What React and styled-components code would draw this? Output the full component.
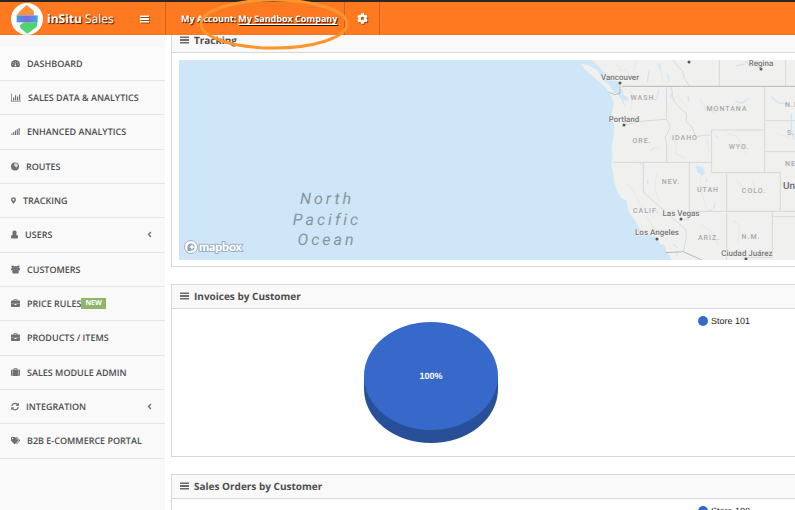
import React from 'react';
import styled, { createGlobalStyle, css } from 'styled-components';
import {
  FaSignal,
  FaMapMarkerAlt,
  FaSyncAlt,
  FaTags,
  FaCog,
  FaAngleLeft,
} from 'react-icons/fa';

const GlobalStyle = createGlobalStyle`
  * {
    box-sizing: border-box;
  }

  body {
    margin: 0;
    background: #fff;
    color: #4d4d4d;
    font-family: 'Open Sans', 'Noto Sans', sans-serif;
    font-size: 10px;
    text-rendering: geometricPrecision;
    overflow: hidden;
  }
`;

const Page = styled.div`
  min-height: 100vh;
  display: flex;
  flex-direction: column;
`;

const TopBar = styled.header`
  position: relative;
  z-index: 2;
  display: flex;
  height: 35px;
  border-top: 2px solid #2b2523;
  background: #ff7921;
  color: #fff;
  text-shadow: 1px 1px 1px rgba(0, 0, 0, 0.85);
`;

const Brand = styled.div`
  width: 166px;
  padding: 0 16px 0 11px;
  display: flex;
  align-items: center;
  justify-content: space-between;
  border-right: 1px solid #cf6320;
`;

const BrandLink = styled.a`
  display: flex;
  align-items: center;
  gap: 4px;
  color: inherit;
  font-size: 12px;
  text-decoration: none;
  white-space: nowrap;
`;

const IconButton = styled.button`
  display: flex;
  align-items: center;
  justify-content: center;
  padding: 0;
  border: 0;
  background: none;
  color: #fff;
  font-size: 11px;

  svg {
    filter: drop-shadow(1px 1px 0 rgba(0, 0, 0, 0.4));
  }
`;

const Account = styled.div`
  position: relative;
  display: flex;
  align-items: center;
  gap: 2px;
  width: 179px;
  padding-left: 15px;
  border-right: 1px solid #cf6320;
  font-size: 9px;
  font-weight: 700;
  white-space: nowrap;

  a {
    color: inherit;
    text-underline-offset: 2px;
  }
`;

const Settings = styled.div`
  width: 35px;
  display: flex;
  justify-content: center;
  border-right: 1px solid #cf6320;
`;

const Highlight = styled.svg`
  position: absolute;
  top: -5px;
  left: 31px;
  pointer-events: none;
`;

const Body = styled.div`
  flex: 1;
  display: flex;
`;

const Sidebar = styled.nav`
  flex: 0 0 165px;
  padding-top: 12px;
  background: #f9f9f9;
`;

const Menu = styled.ul`
  margin: 0;
  padding: 0;
  list-style: none;
`;

const MenuItem = styled.li`
  display: flex;
  height: 34px;
  border-bottom: 1px solid #e5e5e5;

  &:nth-child(3n) {
    height: 35px;
  }

  ${({ $active }) =>
    $active &&
    css`
      background: #fcfcfc;
    `}
`;

const MenuLink = styled.a`
  flex: 1;
  display: flex;
  align-items: center;
  padding: 0 11px 1px;
  color: #4d4d4d;
  font-size: 9px;
  font-weight: 600;
  text-decoration: none;
  white-space: nowrap;
`;

const MenuIcon = styled.span`
  display: flex;
  flex: 0 0 ${({ $width }) => $width}px;
  margin-right: 7px;
  color: #707070;

  svg {
    width: 100%;
    height: 9px;
  }
`;

const Arrow = styled(FaAngleLeft)`
  margin-left: auto;
  color: #707070;
`;

const Badge = styled.span`
  padding: 0 4px;
  background: #8fb56b;
  color: #fff;
  font-size: 7px;
  font-weight: 700;
  line-height: 11px;
`;

const Content = styled.main`
  flex: 1;
  min-width: 0;
  display: flex;
  flex-direction: column;
  gap: 17px;
  margin-top: -7px;
  padding-left: 6px;
`;

const Panel = styled.section`
  border: 1px solid #d8d8d8;
  border-right: 0;
`;

const PanelHeader = styled.h2`
  display: flex;
  align-items: center;
  gap: 5px;
  height: 24px;
  margin: 0;
  padding: 0 0 2px 8px;
  border-bottom: 1px solid #d8d8d8;
  background: #f9f9f9;
  font-size: 10px;
  font-weight: 700;

  svg {
    color: #6a6a6a;
  }
`;

const MapBody = styled.div`
  padding: 7px 0 6px 7px;
`;

const MapCanvas = styled.svg`
  display: block;
  width: 100%;
  height: 200px;
  background: #cfe5f8;
`;

const CityLabel = styled.text`
  fill: #777;
  stroke: #f5f5f4;
  stroke-width: 1px;
  paint-order: stroke;
  font: 500 8px Roboto, sans-serif;
  text-anchor: middle;
`;

const StateLabel = styled.text`
  fill: #a9a9a9;
  font: 500 7px Roboto, sans-serif;
  letter-spacing: 1px;
  text-anchor: ${({ $start }) => ($start ? 'start' : 'middle')};
`;

const OceanLabel = styled.text`
  fill: #84979c;
  font: italic 400 16px Roboto, sans-serif;
  letter-spacing: 3px;
  text-anchor: middle;
`;

const CountryLabel = styled.text`
  fill: #6c6c6c;
  font: 500 10px Roboto, sans-serif;
`;

const MapLogoText = styled.text`
  fill: #fff;
  stroke: #9db2c2;
  stroke-width: 2px;
  paint-order: stroke;
  font: 900 12px Lato, sans-serif;
`;

const ChartBody = styled.div`
  display: grid;
  grid-template-columns: 1fr 105px;
  padding: 13px 0;
`;

const Pie = styled.svg`
  justify-self: center;
  display: block;

  text {
    fill: #fff;
    font: 700 9px 'Liberation Sans', Arial, sans-serif;
    text-anchor: middle;
  }
`;

const Legend = styled.ul`
  margin: 0;
  padding: 0 0 0 8px;
  list-style: none;
  color: #222;
  font: 9px/12px 'Liberation Sans', Arial, sans-serif;
`;

const LegendItem = styled.li`
  display: flex;
  align-items: center;
  gap: 3px;
  margin-top: -7px;

  &::before {
    content: '';
    width: 10px;
    height: 10px;
    border-radius: 50%;
    background: #3669c9;
  }
`;

const BarsIcon = () => (
  <svg width="9" height="8" viewBox="0 0 18 16" fill="currentColor">
    <path d="M0 1h18v3H0zM0 6h18v4H0zM0 12h18v3H0z" />
  </svg>
);

const DashboardIcon = () => (
  <svg viewBox="0 0 18 18" fill="currentColor">
    <path d="M9 2a9 9 0 0 0-9 9c0 2 .6 3.700 1.500 5h15c.9-1.300 1.500-3 1.500-5a9 9 0 0 0-9-9z" />
    <g fill="#f9f9f9">
      <circle cx="3.500" cy="11" r=".8" />
      <circle cx="5" cy="7" r=".8" />
      <circle cx="9" cy="5.200" r=".8" />
      <circle cx="13" cy="7" r=".8" />
      <circle cx="14.500" cy="11" r=".8" />
      <path d="M9.200 7.500l1 .2-.5 3.800a1.600 1.600 0 1 1-1.200-.2z" />
    </g>
  </svg>
);

const ChartIcon = () => (
  <svg viewBox="0 0 20 18" fill="currentColor">
    <path d="M0 1h1.500v14.500H20V17H0zM4 9h2.400v5.500H4zM8 4.500h2.400v10H8zM12 7h2.400v7.500H12zM16 3h2.400v11.500H16z" />
  </svg>
);

const GlobeIcon = () => (
  <svg viewBox="0 0 16 18" fill="currentColor">
    <circle cx="8" cy="9" r="8" />
    <path d="M7 3l5 0 2 4-3 4-3-2-2-3z" fill="#f9f9f9" opacity="0.8" />
  </svg>
);

const UserIcon = () => (
  <svg viewBox="0 0 14 18" fill="currentColor">
    <path d="M7 1a4.200 4.200 0 0 1 4.200 4.500c0 1.400-.5 2.700-1.300 3.500C12.500 9.300 14 11 14 14.500c0 1.600-1 2.500-2.500 2.500h-9C1 17 0 16.100 0 14.500 0 11 1.500 9.300 4.100 9a5 5 0 0 1-1.300-3.500A4.200 4.200 0 0 1 7 1z" />
  </svg>
);

const UsersIcon = () => (
  <svg viewBox="0 0 18 18" fill="currentColor">
    <circle cx="3.500" cy="3.500" r="2.700" />
    <circle cx="14.500" cy="3.500" r="2.700" />
    <path d="M0 9.500C0 7 1 6 2 6h4v5H1.500Q0 11 0 9.500zM18 9.500C18 7 17 6 16 6h-4v5h4.500Q18 11 18 9.500z" />
    <circle cx="9" cy="6.200" r="4" />
    <path d="M2.500 14.500c0-3.500 1.500-5 3.500-5h6c2 0 3.500 1.500 3.500 5 0 1.600-1 2.500-2.500 2.500H5c-1.500 0-2.500-.9-2.500-2.500z" />
  </svg>
);

const BriefcaseIcon = () => (
  <svg viewBox="0 0 18 18" fill="currentColor">
    <path d="M5 3V2Q5 .5 6.500.5h5Q13 .5 13 2v1h3.500Q18 3 18 4.500v5H0v-5Q0 3 1.500 3zM6.500 3h5V2h-5zM0 10.200h7v1.600h4v-1.600h7v4.300q0 1.500-1.500 1.500h-15Q0 16 0 14.500z" />
  </svg>
);

const SuitcaseIcon = () => (
  <svg viewBox="0 0 18 18" fill="currentColor">
    <path d="M5 3V2Q5 .5 6.500.5h5Q13 .5 13 2v1h1.500v13h-11V3zM6.500 3h5V2h-5zM2.700 3v13H2q-2 0-2-2V5q0-2 2-2zM15.300 3v13h.7q2 0 2-2V5q0-2-2-2z" />
  </svg>
);

const Logo = () => (
  <svg width="32" height="32" viewBox="0 0 96 96" aria-hidden="true">
    <defs>
      <linearGradient id="logoBand">
        <stop offset="0" stopColor="#3b9cf0" />
        <stop offset="0.5" stopColor="#8368d8" />
        <stop offset="1" stopColor="#35a9ee" />
      </linearGradient>
    </defs>
    <circle cx="48" cy="48" r="48" fill="#fff" />
    <path d="M47 6l21 17 1 14H17l10-13z" fill="#fb9140" />
    <path d="M27 67l11-9h41l-2 14-28 20-21-17z" fill="#50d36f" />
    <path d="M17 37h63v21H17z" fill="url(#logoBand)" />
  </svg>
);

const menu = [
  { label: 'DASHBOARD', icon: DashboardIcon, width: 9, active: true },
  { label: 'SALES DATA & ANALYTICS', icon: ChartIcon, width: 10 },
  { label: 'ENHANCED ANALYTICS', icon: FaSignal, width: 9 },
  { label: 'ROUTES', icon: GlobeIcon, width: 8 },
  { label: 'TRACKING', icon: FaMapMarkerAlt, width: 5 },
  { label: 'USERS', icon: UserIcon, width: 7, children: true },
  { label: 'CUSTOMERS', icon: UsersIcon, width: 9 },
  { label: 'PRICE RULES', icon: BriefcaseIcon, width: 9, badge: 'NEW' },
  { label: 'PRODUCTS / ITEMS', icon: BriefcaseIcon, width: 9 },
  { label: 'SALES MODULE ADMIN', icon: SuitcaseIcon, width: 9 },
  { label: 'INTEGRATION', icon: FaSyncAlt, width: 8, children: true },
  { label: 'B2B E-COMMERCE PORTAL', icon: FaTags, width: 9 },
];

const cities = [
  ['Vancouver', 441, 20, 441, 23],
  ['Portland', 445, 62, 445, 65],
  ['Regina', 582, 6, 582, 9],
  ['Las Vegas', 502, 156, 502, 159],
  ['Los Angeles', 478, 175, 478, 179],
  ['Ciudad Juárez', 568, 196, 567, 199],
  ['', 510, 0, 510, 2],
];

const states = [
  ['WASH.', 465, 40],
  ['MONTANA', 548, 51],
  ['ORE.', 463, 83],
  ['IDAHO', 506, 80],
  ['WYO.', 560, 89],
  ['NEV.', 492, 124],
  ['UTAH', 529, 132],
  ['COLO.', 575, 133],
  ['CALIF.', 467, 153],
  ['ARIZ.', 530, 180],
  ['N.M.', 572, 179],
  ['N.D.', 606, 47, true],
  ['S.D.', 608, 75, true],
  ['NEBR.', 606, 106, true],
];

const TrackingMap = () => (
  <MapCanvas role="img" aria-label="Tracking map">
    {/* land is drawn at three times the map's scale */}
    <g transform="translate(381 -10) scale(.3333)">
      <g fill="#f0f0ef">
        <path d="M62 42l20 2 18 10 14 8 12 24 22 20 14 22 8 8-20-4-12-18-16-14-24-22-26-22z" />
        <path d="M98 28l8 14 14 8 6 14 10 4 2 12 26 10 16 6v28l12 12 14 8-6 8-20-8-8-14-26-4 10 18 6 16-6 30 6 40-2 32-6 30 4 30-4 26 6 24 2 24 10 26 10 20 15 10 10 35 15 20 15 25 6 15 30 8 20 10 8 17 14 7 4 16 10 14 6 16H2000V20H98z" />
      </g>
      <g fill="none" stroke="#e9e9e7" strokeWidth="4">
        <path d="M170 40l12 22 16-4 14 24M230 34l-10 28 22 24M290 40l12 20 6 30 16 10M208 120l10 18-4 40M350 130l14 24 20 18M420 150l22 30 28 10M330 260l20 20-4 30 30 16M500 250l30 10 22 28-8 12M540 290l22 22M420 380l6 50 14 50M290 370l-6 40 12 40M530 390l22 26 26 4M580 390l4 44M520 510l20 20-6 50M420 520l32 24 24 40M660 400l24 10M200 400l24 26 16 40 40 36M260 500l24 40 22 20M440 270l10 40M650 250l40 14M270 300l28-8" />
      </g>
      <g fill="none" stroke="#cfe5f8" strokeWidth="4">
        <path d="M184 118l6 16-4 16 10 18M268 62l-6 34M322 70l6 26M296 118l-6 30M298 40l4 20M525 155l22 4 18-14M634 140l20 18 24 4M694 190v50l8 30M528 48l26-6M556 34l10 10M616 40h20M384 138l2 16M334 130l-2 14M440 486l16-8M466 460l-6 16M370 510l16-4M240 338l4 6M262 390l2 12M250 422l4 6M466 256l8 8M276 296l8-2M340 584l14 10M350 606l2 12M196 450l6 14" />
      </g>
      <path d="M406 346l22 6 8 18-10 8-14-14zM436 384l8 8-6 6z" fill="#cfe5f8" />
      <g fill="none" stroke="#d9d9d9" strokeWidth="3">
        <path d="M191 225l60-12 69-5M320 109v100l12 20-16 34 4 18v56M160 337h295M334 109l6 40 20 26 20 16-2 24 18 16 12 31 20-6 27-1M614 240H455v128h206v116M614 109v259M614 212h1400M614 305h1400M250 337v90l128 113v26l-8 40M388 337v147l-4 28M500 368v262M388 484h1600M637 484v138h-88M637 500h1400M478 30v79M677 30v79M340 30l12 18 14 14 8 24 14 22" />
      </g>
      <g fill="none" stroke="#b9b9b9" strokeWidth="3">
        <path d="M146 126l18 8 16-4v-20M184 109h1800M316 608l54-3 55 25" />
      </g>
    </g>
    {states.map(([name, x, y, start]) => (
      <StateLabel key={name} x={x} y={y} $start={start}>
        {name}
      </StateLabel>
    ))}
    {cities.map(([name, x, y, dotX, dotY]) => (
      <g key={name}>
        <circle cx={dotX} cy={dotY} r="1.500" fill="#555" />
        <CityLabel x={x} y={y}>
          {name}
        </CityLabel>
      </g>
    ))}
    <CountryLabel x="604" y="129">
      United States
    </CountryLabel>
    <OceanLabel>
      <tspan x="148" y="144">North</tspan>
      <tspan x="148" y="165">Pacific</tspan>
      <tspan x="148" y="185">Ocean</tspan>
    </OceanLabel>
    <circle cx="12" cy="187" r="6.500" fill="#fff" stroke="#9db2c2" />
    <circle cx="12" cy="187" r="3.500" fill="#8da2b2" />
    <path d="M8.500 187v4H12z" fill="#8da2b2" />
    <path d="M13 184l1 2 2 1-2 1-1 2-1-2-2-1 2-1z" fill="#fff" />
    <MapLogoText x="20" y="191">
      mapbox
    </MapLogoText>
  </MapCanvas>
);

const PieChart = () => (
  <Pie width="134" height="121" viewBox="0 0 134 121">
    <path d="M0 54v13a67 54 0 0 0 134 0V54z" fill="#285099" />
    <ellipse cx="67" cy="54" rx="67" ry="54" fill="#3669c9" />
    <text x="67" y="57">
      100%
    </text>
  </Pie>
);

const ChartPanel = ({ title, store }) => (
  <Panel>
    <PanelHeader>
      <BarsIcon />
      {title}
    </PanelHeader>
    <ChartBody>
      <PieChart />
      <Legend>
        <LegendItem>{store}</LegendItem>
      </Legend>
    </ChartBody>
  </Panel>
);

const App = () => {
  return (
    <Page>
      <GlobalStyle />
      <TopBar>
        <Brand>
          <BrandLink href="#home">
            <Logo />
            <span>
              <b>inSitu</b> Sales
            </span>
          </BrandLink>
          <IconButton aria-label="Toggle menu">
            <BarsIcon />
          </IconButton>
        </Brand>
        <Account>
          <span>My Account:</span>
          <a href="#account">My Sandbox Company</a>
          <Highlight width="154" height="56" viewBox="0 0 154 56">
            <ellipse cx="77" cy="27" rx="73" ry="24" fill="none" stroke="#fc962c" strokeWidth="3" />
          </Highlight>
        </Account>
        <Settings>
          <IconButton aria-label="Settings">
            <FaCog />
          </IconButton>
        </Settings>
      </TopBar>

      <Body>
        <Sidebar>
          <Menu>
            {menu.map(({ label, icon: Icon, width, active, badge, children }) => (
              <MenuItem key={label} $active={active}>
                <MenuLink href="#menu">
                  <MenuIcon $width={width}>
                    <Icon />
                  </MenuIcon>
                  {label}
                  {badge && <Badge>{badge}</Badge>}
                  {children && <Arrow />}
                </MenuLink>
              </MenuItem>
            ))}
          </Menu>
        </Sidebar>

        <Content>
          <Panel>
            <PanelHeader>
              <BarsIcon />
              Tracking
            </PanelHeader>
            <MapBody>
              <TrackingMap />
            </MapBody>
          </Panel>
          <ChartPanel title="Invoices by Customer" store="Store 101" />
          <ChartPanel title="Sales Orders by Customer" store="Store 100" />
        </Content>
      </Body>
    </Page>
  );
};

export default App;
